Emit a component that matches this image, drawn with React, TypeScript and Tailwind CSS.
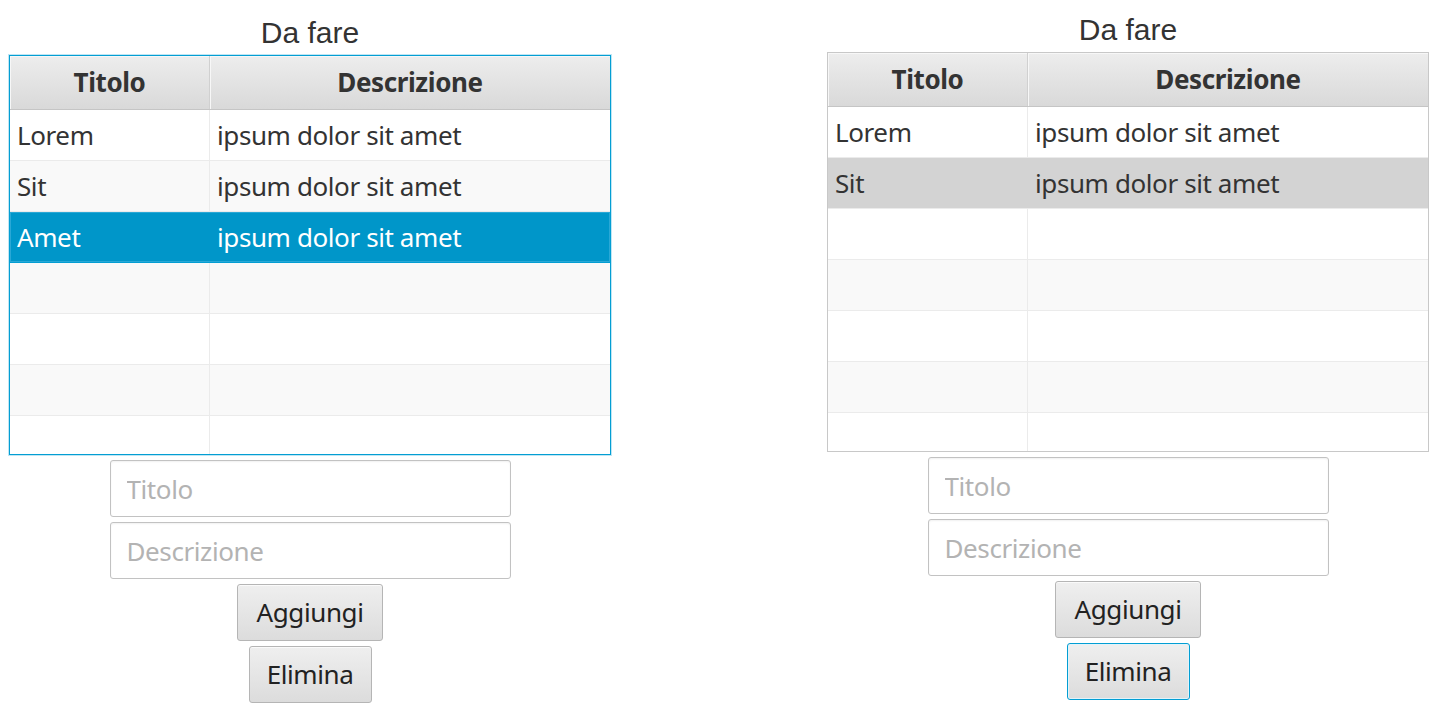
import React from "react";

type Row = { titolo: string; descrizione: string };

const ROWS: Row[] = [
  { titolo: "Lorem", descrizione: "ipsum dolor sit amet" },
  { titolo: "Sit", descrizione: "ipsum dolor sit amet" },
  { titolo: "Amet", descrizione: "ipsum dolor sit amet" },
];

const BODY_FONT = { fontFamily: '"Noto Sans", "Open Sans", sans-serif' };

function TodoPanel({
  rows,
  selected,
  tableFocused,
  selectionColor,
  buttonFocused,
  className,
}: {
  rows: Row[];
  selected: number;
  tableFocused: boolean;
  selectionColor: "blue" | "gray";
  buttonFocused: boolean;
  className?: string;
}) {
  // sempre 7 righe visibili, l'ultima tagliata
  const visible = Array.from({ length: 7 }, (_, i) => rows[i] ?? null);

  return (
    <div className={`flex flex-col items-center w-[602px] gap-[5px] ${className ?? ""}`}>
      <div className="h-[52px] -mb-[5px] pt-[15px] w-full">
        <h1
          className="text-center text-[30px] leading-[30px] text-[#333333]"
          style={{ fontFamily: '"Liberation Sans", Arial, sans-serif' }}
        >
          Da fare
        </h1>
      </div>

      <div
        className={`w-[602px] h-[400px] overflow-hidden border bg-white ${
          tableFocused
            ? "border-[#039ed3] shadow-[0_0_0_1px_#bfe6f4]"
            : "border-[#c8c8c8]"
        }`}
        style={BODY_FONT}
      >
        <div className="flex h-[54px] border-b border-[#c5c5c5] bg-gradient-to-b from-[#ededed] to-[#d9d9d9] text-[26px] font-bold text-[#333333] tracking-[-0.4px]">
          <div className="w-[200px] flex items-center justify-center border-r border-[#d0d0d0] shadow-[inset_1px_1px_0_#f7f7f7]">
            Titolo
          </div>
          <div className="flex-1 flex items-center justify-center shadow-[inset_1px_1px_0_#f7f7f7]">
            Descrizione
          </div>
        </div>

        {visible.map((row, i) => {
          const isSel = i === selected;
          const stripe = i % 2 === 1 ? "bg-[#f9f9f9]" : "bg-white";
          const bg = isSel
            ? selectionColor === "blue"
              ? "bg-[#0096c9] text-white shadow-[inset_0_0_0_1px_#2aa8d6]"
              : "bg-[#d3d3d3] text-[#333333]"
            : `${stripe} text-[#333333]`;
          return (
            <div
              key={i}
              className={`flex h-[51px] shrink-0 border-b text-[26px] tracking-[-0.4px] ${
                isSel && selectionColor === "blue" ? "border-[#039ed3]" : "border-[#ebebeb]"
              } ${bg}`}
            >
              <div
                className={`w-[200px] flex items-center pl-[7px] border-r ${
                  isSel ? "border-transparent" : "border-[#ebebeb]"
                }`}
              >
                {row?.titolo}
              </div>
              <div className="flex-1 flex items-center pl-[7px]">{row?.descrizione}</div>
            </div>
          );
        })}
      </div>

      <input
        placeholder="Titolo"
        className="w-[401px] h-[57px] rounded-[3px] border border-[#c2c2c2] bg-white px-[16px] text-[26px] tracking-[-0.4px] text-[#333333] placeholder:text-[#b3b3b3] shadow-[inset_0_1px_2px_rgba(0,0,0,0.06)] outline-none"
        style={BODY_FONT}
      />
      <input
        placeholder="Descrizione"
        className="w-[401px] h-[57px] rounded-[3px] border border-[#c2c2c2] bg-white px-[16px] text-[26px] tracking-[-0.4px] text-[#333333] placeholder:text-[#b3b3b3] shadow-[inset_0_1px_2px_rgba(0,0,0,0.06)] outline-none"
        style={BODY_FONT}
      />
      <button
        className="w-[146px] h-[57px] rounded-[3px] border border-[#b5b5b5] bg-gradient-to-b from-[#efefef] to-[#dcdcdc] text-[26px] tracking-[-0.4px] text-[#222222] shadow-[inset_0_1px_0_#fafafa]"
        style={BODY_FONT}
      >
        Aggiungi
      </button>
      <button
        className={`w-[123px] h-[57px] rounded-[3px] border bg-gradient-to-b from-[#efefef] to-[#dcdcdc] text-[26px] tracking-[-0.4px] text-[#222222] ${
          buttonFocused
            ? "border-[#039ed3] shadow-[inset_0_0_0_1px_#e2f3fa]"
            : "border-[#b5b5b5] shadow-[inset_0_1px_0_#fafafa]"
        }`}
        style={BODY_FONT}
      >
        Elimina
      </button>
    </div>
  );
}

export default function App() {
  return (
    <div className="flex items-start w-[1439px] h-[726px] bg-white overflow-hidden">
      <TodoPanel
        rows={ROWS}
        selected={2}
        tableFocused
        selectionColor="blue"
        buttonFocused={false}
        className="ml-[9px] mt-[3px]"
      />
      <TodoPanel
        rows={ROWS.slice(0, 2)}
        selected={1}
        tableFocused={false}
        selectionColor="gray"
        buttonFocused
        className="ml-[216px]"
      />
    </div>
  );
}
